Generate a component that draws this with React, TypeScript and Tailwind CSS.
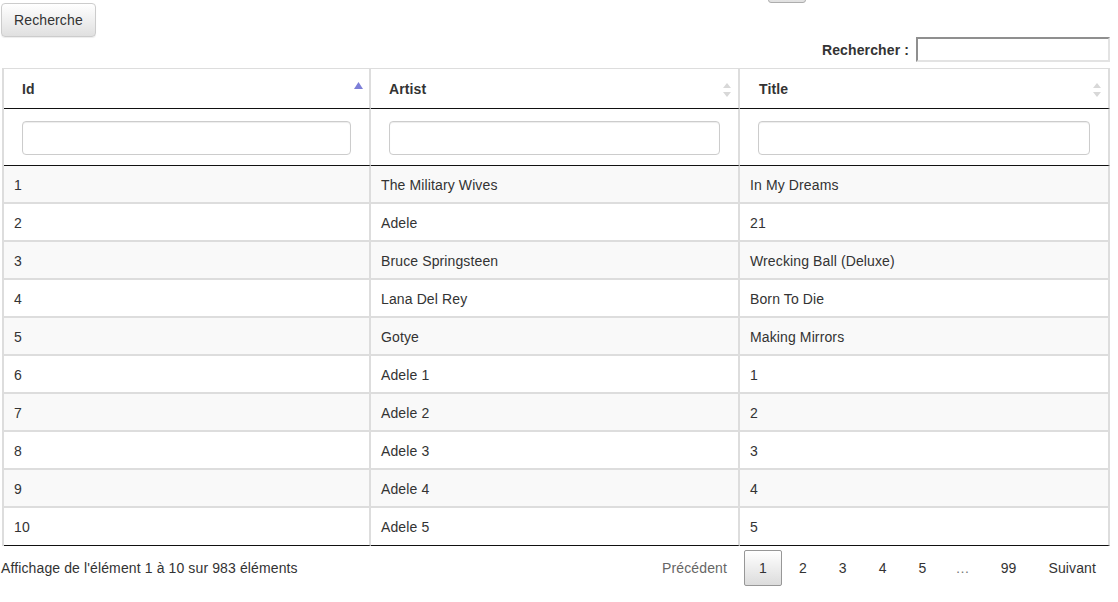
import React from "react";

const rows = [
  ["1", "The Military Wives", "In My Dreams"],
  ["2", "Adele", "21"],
  ["3", "Bruce Springsteen", "Wrecking Ball (Deluxe)"],
  ["4", "Lana Del Rey", "Born To Die"],
  ["5", "Gotye", "Making Mirrors"],
  ["6", "Adele 1", "1"],
  ["7", "Adele 2", "2"],
  ["8", "Adele 3", "3"],
  ["9", "Adele 4", "4"],
  ["10", "Adele 5", "5"],
];

function SortBoth() {
  return (
    <svg width="8" height="14" viewBox="0 0 8 14" className="absolute right-[7px] top-[14px]">
      <path d="M4 0 L8 5 L0 5 Z" fill="#d8d8d8" />
      <path d="M4 14 L8 9 L0 9 Z" fill="#d8d8d8" />
    </svg>
  );
}

function SortAsc() {
  return (
    <svg width="9" height="8" viewBox="0 0 9 8" className="absolute right-[6px] top-[13px]">
      <path d="M4.5 0 L9 7 L0 7 Z" fill="#7d7fd8" />
    </svg>
  );
}

export default function App() {
  const font = { fontFamily: '"Liberation Sans", Arial, Helvetica, sans-serif' };
  return (
    <div className="relative w-[1118px] h-[602px] bg-white text-[14px] text-[#333] overflow-hidden tracking-[0.12px]" style={font}>
      <div className="absolute left-[768px] top-[-20px] w-[38px] h-[23px] rounded-[3px] border border-[#adadad] bg-gradient-to-b from-white to-[#e0e0e0]" />
      <div className="w-[1110px] pt-[3px]">
        <button className="ml-[1px] h-[34px] px-[12px] rounded-[4px] border border-[#ccc] bg-gradient-to-b from-white to-[#e0e0e0] text-[14px] text-[#333] shadow-[0_1px_1px_rgba(0,0,0,0.075)] leading-[20px]">
          Recherche
        </button>
        <div className="flex justify-end items-center h-[25px]">
          <span className="font-bold text-[14px] mr-[7px] pt-[1px]">Rechercher :</span>
          <input className="w-[194px] h-[25px] border-2 border-t-[#8f8f8f] border-l-[#8f8f8f] border-r-[#e3e3e3] border-b-[#e3e3e3] bg-white outline-none" style={{ borderStyle: "solid" }} />
        </div>
        <table className="mt-[6px] ml-[2px] w-[1108px] border-separate border-spacing-0 table-fixed border-t border-l-2 border-[#dddddd]">
          <colgroup>
            <col className="w-[367px]" />
            <col className="w-[369px]" />
            <col />
          </colgroup>
          <thead>
            <tr className="h-[40px]">
              {["Id", "Artist", "Title"].map((h, i) => (
                <th
                  key={h}
                  className={
                    (i === 2 ? "pl-[19px] " : "pl-[18px] ") +
                    "relative text-left font-bold text-[14px] pt-[2px] border-r-2 border-[#dddddd] border-b border-b-[#111]"
                  }
                >
                  {h}
                  {i === 0 ? <SortAsc /> : <SortBoth />}
                </th>
              ))}
            </tr>
            <tr className="h-[57px]">
              {[0, 1, 2].map((i) => (
                <th key={i} className="border-r-2 border-[#dddddd] border-b border-b-[#111] pl-[18px] pr-[18px] pt-[2px] font-normal">
                  <input className="block w-full h-[34px] rounded-[4px] border border-[#cccccc] bg-white shadow-[inset_0_1px_1px_rgba(0,0,0,0.075)] outline-none" />
                </th>
              ))}
            </tr>
          </thead>
          <tbody>
            {rows.map((r, idx) => (
              <tr key={r[0]} className={idx % 2 === 0 ? "h-[38px] bg-[#f9f9f9]" : "h-[38px] bg-white"}>
                {r.map((c, i) => (
                  <td
                    key={i}
                    className={
                      "pl-[10px] pt-[2px] border-r-2 border-[#dddddd] " +
                      (idx === rows.length - 1 ? "border-b border-b-[#111]" : "border-b-2 border-b-[#dddddd]")
                    }
                  >
                    {c}
                  </td>
                ))}
              </tr>
            ))}
          </tbody>
        </table>
        <div className="flex items-center justify-between mt-[4px] h-[36px]">
          <div className="ml-[1px] pt-[1px]">Affichage de l'élément 1 à 10 sur 983 éléments</div>
          <div className="flex items-center">
            <span className="px-[14px] leading-[20px] text-[#666]">Précédent</span>
            <span className="ml-[3px] px-[14px] py-[7px] leading-[20px] border border-[#979797] rounded-[2px] bg-gradient-to-b from-white to-[#dcdcdc]">1</span>
            {["2", "3", "4", "5"].map((p) => (
              <span key={p} className="ml-[2px] px-[14px] py-[8px] leading-[20px] border border-transparent">{p}</span>
            ))}
            <span className="px-[14px] leading-[20px] text-[#777]">…</span>
            <span className="ml-[3px] px-[14px] py-[8px] leading-[20px]">99</span>
            <span className="ml-[4px] px-[14px] py-[8px] leading-[20px]">Suivant</span>
          </div>
        </div>
      </div>
    </div>
  );
}
